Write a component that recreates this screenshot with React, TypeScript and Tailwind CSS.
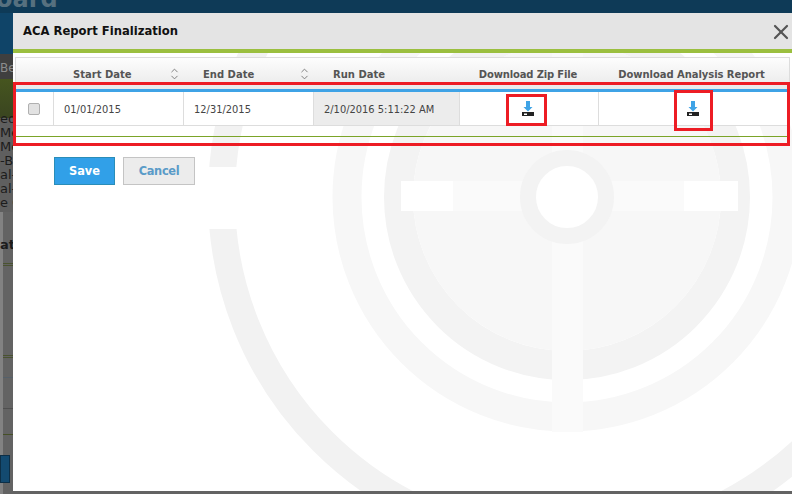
import React from "react";
import { ChevronDown, ChevronUp, X } from "lucide-react";

const Watermark = () => (
  <svg
    className="absolute left-0 top-0"
    width={779}
    height={478}
    viewBox="13 13 779 478"
    fill="none"
  >
    <circle cx={567} cy={197} r={345.5} stroke="#f2f2f2" strokeWidth={27} />
    <rect x={200} y={167} width={45} height={62} fill="#ffffff" />
    <circle cx={567} cy={197} r={220} stroke="#f7f7f7" strokeWidth={29} />
    <circle cx={567} cy={197} r={168.5} stroke="#f3f3f3" strokeWidth={29} />
    <circle cx={567} cy={197} r={154} fill="#f7f7f7" />
    <rect x={552} y={197} width={31} height={235} fill="#fafafa" />
    <rect x={552} y={30} width={31} height={167} fill="#fafafa" />
    <rect x={453} y={181} width={231} height={30} fill="#fafafa" />
    <rect x={401} y={181} width={52} height={30} fill="#ffffff" />
    <rect x={684} y={181} width={54} height={30} fill="#ffffff" />
    <circle cx={567} cy={197} r={39} fill="#ffffff" stroke="#f3f3f3" strokeWidth={16} />
  </svg>
);

const SortIcon = () => (
  <span className="flex flex-col items-center text-[#777777]">
    <ChevronUp size={11} strokeWidth={2} className="-mb-[4px]" />
    <ChevronDown size={11} strokeWidth={2} />
  </span>
);

const DownloadIcon = () => (
  <svg width={12} height={15} viewBox="0 0 12 15">
    <path d="M4 0h4v6h2.5L6 10.5 1.5 6H4z" fill="#3fa3e6" />
    <rect x={0} y={11} width={12} height={4} fill="#222222" />
    <rect x={2} y={12.5} width={3} height={1.5} fill="#ffffff" />
  </svg>
);

const App = () => {
  return (
    <div className="relative h-[494px] w-[792px] overflow-hidden bg-[#636363] font-['Liberation_Sans',sans-serif]">
      {/* page behind the dialog */}
      <div className="flex h-full flex-col">
        <div className="h-[13px] overflow-hidden bg-[#0e3a57] font-['DejaVu_Sans',sans-serif] text-[24px] font-bold leading-[14px] text-[#56707f]">
          <div className="-ml-[4px] -mt-[8px]">oard</div>
        </div>
        <div className="h-[41px] bg-[#0f4468]" />
        <div className="h-[25px] bg-[#3f3f3f] pt-[5px] font-['DejaVu_Sans',sans-serif] text-[12px] text-[#8c8c8c]">Be</div>
        <div className="h-[39px] bg-gradient-to-b from-[#46551f] to-[#3a4520]" />
        <div className="h-[94px] bg-[#5f5f5f] font-['DejaVu_Sans',sans-serif] text-[13px] leading-[14px] text-[#1c1c1c]">
          <div className="-mt-[6px]">ed</div>
          <div>Me</div>
          <div>Me</div>
          <div>-Bl</div>
          <div>al-B</div>
          <div>al-I</div>
          <div>e C</div>
        </div>
        <div className="flex-1 border-l-[3px] border-[#828282] bg-[#636363]">
          <div className="pt-[26px] font-['DejaVu_Sans',sans-serif] text-[13px] font-bold leading-[14px] text-[#1c1c1c]">
            <div className="-ml-[3px]">ata</div>
          </div>
          <div className="mt-[11px] h-[3px] border-y border-[#4a5330]" />
          <div className="mt-[89px] h-[3px] border-y border-[#4a5330]" />
          <div className="mt-[19px] h-px bg-[#55606a]" />
          <div className="mt-[30px] h-px bg-[#4f4f4f]" />
          <div className="mt-[25px] h-px bg-[#465026]" />
          <div className="-ml-[3px] mt-[20px] h-[28px] w-[10px] border border-[#0d2f47] bg-[#134a70]" />
        </div>
      </div>

      {/* dialog */}
      <div className="absolute bottom-[3px] left-[13px] right-0 top-[13px] flex flex-col overflow-hidden bg-white">
        <Watermark />
        <div className="relative flex h-[36px] items-center justify-between bg-[#e4e4e4] pl-[10px]">
          <span className="pt-[2px] font-['DejaVu_Sans',sans-serif] text-[11.6px] font-bold text-[#111111]">
            ACA Report Finalization
          </span>
          <X size={24} strokeWidth={2.2} className="-mr-[1px] mt-[2px] text-[#555555]" />
        </div>
        <div className="relative h-[4px] bg-[#9bbf3f]" />

        <div className="relative mx-[2px] mt-[4px] w-[775px] border-x border-[#dddddd]">
          <div className="flex h-[32px] items-center border-t border-[#dddddd] bg-gradient-to-b from-[#fdfdfd] to-[#e9e9e9] pb-[4px] pt-[5px] font-['DejaVu_Sans',sans-serif] text-[10px] font-bold text-[#555555]">
            <div className="w-[38px]" />
            <div className="flex w-[130px] items-center justify-between pl-[19px] pr-[4px]">
              Start Date
              <SortIcon />
            </div>
            <div className="flex w-[130px] items-center justify-between pl-[19px] pr-[4px]">
              End Date
              <SortIcon />
            </div>
            <div className="w-[146px] pl-[19px]">Run Date</div>
            <div className="w-[136px] text-center tracking-[-0.15px]">Download Zip File</div>
            <div className="flex-1 pr-[2px] text-center tracking-[-0.05px]">Download Analysis Report</div>
          </div>
          <div className="h-[3px] bg-[#3fa3e6]" />
          <div className="flex h-[34px] border-b border-[#dddddd] bg-white font-['DejaVu_Sans',sans-serif] text-[9.9px] text-[#444444]">
            <div className="flex w-[38px] items-center justify-center border-r border-[#dddddd] pr-[2px]">
              <input
                type="checkbox"
                className="h-[12px] w-[12px] appearance-none rounded-[2px] border border-[#b0b0b0] bg-[#e2e2e2]"
              />
            </div>
            <div className="flex w-[130px] items-center border-r border-[#dddddd] pl-[10px] pt-[3px]">01/01/2015</div>
            <div className="flex w-[130px] items-center border-r border-[#dddddd] pl-[10px] pt-[3px]">12/31/2015</div>
            <div className="flex w-[146px] items-center border-r border-[#dddddd] bg-[#ececec] pl-[10px] pt-[3px]">
              2/10/2016 5:11:22 AM
            </div>
            <div className="flex w-[139px] items-center justify-center border-r border-[#dddddd] pr-[3px]">
              <DownloadIcon />
            </div>
            <div className="flex flex-1 items-center justify-center pr-[2px]">
              <DownloadIcon />
            </div>
          </div>
          <div className="h-[11px] border-b border-[#7ba428]" />
        </div>

        <div className="relative ml-[41px] mt-[20px] flex gap-[8px] font-['DejaVu_Sans',sans-serif] text-[11.4px] font-bold">
          <button className="h-[28px] w-[61px] border border-[#2a8db8] bg-[#31a0e8] pt-[2px] text-white">Save</button>
          <button className="h-[28px] w-[72px] border border-[#c4c4c4] bg-[#ececec] pt-[2px] tracking-[-0.3px] text-[#5a9bc8]">Cancel</button>
        </div>
      </div>

      {/* red annotation boxes */}
      <div className="absolute left-[13px] top-[82px] h-[64px] w-[777px] border-[3px] border-[#ed1c24]" />
      <div className="absolute left-[506px] top-[94px] h-[32px] w-[41px] border-[3px] border-[#ed1c24]" />
      <div className="absolute left-[674px] top-[90px] h-[41px] w-[39px] border-[3px] border-[#ed1c24]" />
    </div>
  );
};

export default App;
